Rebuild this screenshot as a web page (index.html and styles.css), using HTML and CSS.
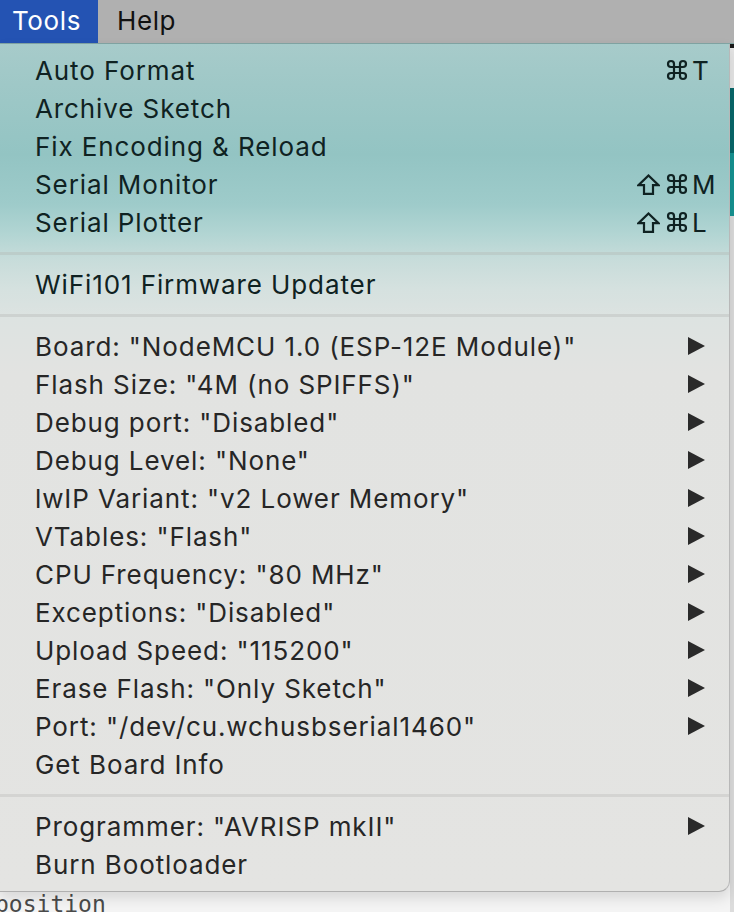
FILE: index.html
```html
<!DOCTYPE html>
<html>
<head>
<meta charset="utf-8">
<link rel="stylesheet" href="styles.css">
</head>
<body>
<div class="menubar">
  <div class="mb-item active">Tools</div>
  <div class="mb-item">Help</div>
</div>
<div class="backdrop">
  <div class="editor">
    <div class="code">position</div>
  </div>
  <div class="strip">
    <div class="strip-top"></div>
    <div class="strip-light"></div>
    <div class="strip-dark"></div>
    <div class="strip-teal"></div>
    <div class="strip-rest"></div>
  </div>
</div>
<div class="menu">
  <div class="row"><span class="label">Auto Format</span><span class="mods"><svg class="cmd" viewBox="0 0 22 22"><path d="M8 8V5A3 3 0 1 0 5 8H17A3 3 0 1 0 14 5V17A3 3 0 1 0 17 14H5A3 3 0 1 0 8 17Z"/></svg></span><span class="key">T</span></div>
  <div class="row"><span class="label">Archive Sketch</span></div>
  <div class="row"><span class="label">Fix Encoding &amp; Reload</span></div>
  <div class="row"><span class="label">Serial Monitor</span><span class="mods"><svg class="shift" viewBox="0 0 23 21"><path d="M11.5 1.5L21.5 11.2H16V19.8H7V11.2H1.5Z"/></svg><svg class="cmd" viewBox="0 0 22 22"><path d="M8 8V5A3 3 0 1 0 5 8H17A3 3 0 1 0 14 5V17A3 3 0 1 0 17 14H5A3 3 0 1 0 8 17Z"/></svg></span><span class="key">M</span></div>
  <div class="row"><span class="label">Serial Plotter</span><span class="mods"><svg class="shift" viewBox="0 0 23 21"><path d="M11.5 1.5L21.5 11.2H16V19.8H7V11.2H1.5Z"/></svg><svg class="cmd" viewBox="0 0 22 22"><path d="M8 8V5A3 3 0 1 0 5 8H17A3 3 0 1 0 14 5V17A3 3 0 1 0 17 14H5A3 3 0 1 0 8 17Z"/></svg></span><span class="key">L</span></div>
  <div class="sep sep1"></div>
  <div class="row"><span class="label">WiFi101 Firmware Updater</span></div>
  <div class="sep sep2"></div>
  <div class="row grey"><span class="label">Board: "NodeMCU 1.0 (ESP-12E Module)"</span><span class="arrow"></span></div>
  <div class="row grey"><span class="label">Flash Size: "4M (no SPIFFS)"</span><span class="arrow"></span></div>
  <div class="row grey"><span class="label">Debug port: "Disabled"</span><span class="arrow"></span></div>
  <div class="row grey"><span class="label">Debug Level: "None"</span><span class="arrow"></span></div>
  <div class="row grey"><span class="label">lwIP Variant: "v2 Lower Memory"</span><span class="arrow"></span></div>
  <div class="row grey"><span class="label">VTables: "Flash"</span><span class="arrow"></span></div>
  <div class="row grey"><span class="label">CPU Frequency: "80 MHz"</span><span class="arrow"></span></div>
  <div class="row grey"><span class="label">Exceptions: "Disabled"</span><span class="arrow"></span></div>
  <div class="row grey"><span class="label">Upload Speed: "115200"</span><span class="arrow"></span></div>
  <div class="row grey"><span class="label">Erase Flash: "Only Sketch"</span><span class="arrow"></span></div>
  <div class="row grey"><span class="label">Port: "/dev/cu.wchusbserial1460"</span><span class="arrow"></span></div>
  <div class="row grey"><span class="label">Get Board Info</span></div>
  <div class="sep sep3"></div>
  <div class="row grey"><span class="label">Programmer: "AVRISP mkII"</span><span class="arrow"></span></div>
  <div class="row grey"><span class="label">Burn Bootloader</span></div>
</div>
</body>
</html>
```
FILE: styles.css
```css
html, body {
  margin: 0;
  padding: 0;
}
body {
  width: 734px;
  height: 912px;
  overflow: hidden;
  position: relative;
  background: #f2f2f2;
  font-family: Inter, "Liberation Sans", sans-serif;
}
.menubar {
  height: 44px;
  background: #b0b0b0;
  display: flex;
  align-items: stretch;
  font-size: 26px;
  letter-spacing: 0.6px;
  color: #111;
  border-bottom: 1px solid #82a6a5;
  box-sizing: border-box;
}
.mb-item {
  display: flex;
  align-items: center;
  padding: 0 0 2px 12px;
}
.mb-item.active {
  background: #2453b3;
  color: #fff;
  width: 98px;
  margin-right: 7px;
  box-sizing: border-box;
}
.backdrop {
  height: 868px;
  display: flex;
}
.editor {
  flex: 1;
  background: #f4f4f4;
  display: flex;
  flex-direction: column;
  justify-content: flex-end;
}
.code {
  font-family: "DejaVu Sans Mono", monospace;
  font-size: 23px;
  color: #4a4a4a;
  margin-left: -5px;
  line-height: 20px;
  height: 18px;
  overflow: hidden;
}
.strip {
  width: 4px;
  display: flex;
  flex-direction: column;
}
.strip-top { height: 4px; background: #1a1a1a; }
.strip-light { height: 40px; background: #e6e6e6; }
.strip-dark { height: 65px; background: #08686a; }
.strip-teal { height: 63px; background: #159392; }
.strip-rest { flex: 1; background: #dcdcdc; }
.menu {
  position: absolute;
  left: 0;
  top: 44px;
  width: 730px;
  height: 848px;
  box-sizing: border-box;
  padding: 7px 0 9px 0;
  border-right: 1px solid #b8b8b8;
  border-bottom: 1px solid #b0b0b0;
  border-bottom-right-radius: 11px;
  background: linear-gradient(to bottom,
    #a7cbca 0px,
    #9fc8c7 40px,
    #93c4c3 110px,
    #9ecbca 160px,
    #b2d5d3 190px,
    #c7dcda 215px,
    #d5e1df 245px,
    #dde3e1 275px,
    #e2e3e1 330px,
    #e4e4e2 848px);
  box-shadow: 0 6px 14px rgba(0,0,0,0.12);
  font-size: 26px;
  letter-spacing: 0.9px;
  color: #0f2222;
}
.row {
  height: 38px;
  display: flex;
  align-items: center;
  padding-left: 35px;
}
.row.grey { color: #262626; }
.label {
  flex: 1;
  white-space: nowrap;
}
.mods {
  display: flex;
  align-items: center;
  gap: 6px;
  margin-right: 4px;
}
.mods svg {
  fill: none;
  stroke: #0f2222;
  stroke-width: 2.2;
}
.cmd {
  width: 22px;
  height: 22px;
}
.shift {
  width: 23px;
  height: 21px;
}
.key {
  width: 37px;
  box-sizing: border-box;
}
.arrow {
  width: 0;
  height: 0;
  border-top: 9px solid transparent;
  border-bottom: 9px solid transparent;
  border-left: 17px solid #2a2a2a;
  margin-right: 24px;
}
.sep {
  height: 24px;
  display: flex;
  align-items: center;
}
.sep::before {
  content: "";
  display: block;
  width: 100%;
  height: 3px;
}
.sep1::before { background: #bccdca; }
.sep2::before { background: #cdd2d0; }
.sep3::before { background: #d4d4d2; }
```
